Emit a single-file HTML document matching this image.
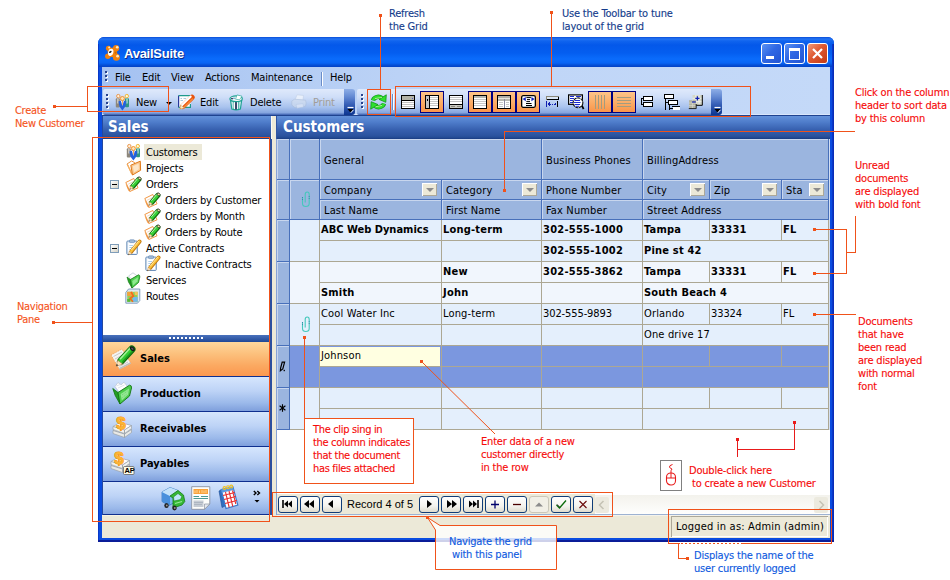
<!DOCTYPE html>
<html><head><meta charset="utf-8"><title>AvailSuite</title>
<style>
html,body{margin:0;padding:0}
body{width:950px;height:580px;position:relative;overflow:hidden;background:#fff;font-family:"DejaVu Sans Condensed","Liberation Sans",sans-serif;font-size:11px;color:#000;line-height:13px}
.a{position:absolute}
svg{position:absolute;overflow:visible}
.t{position:absolute;white-space:nowrap;letter-spacing:-0.2px}
.b{font-weight:bold}
.g{letter-spacing:.15px}.gb{letter-spacing:.2px}.n{letter-spacing:-.1px}.gb.n{letter-spacing:.25px}
#win{left:98px;top:37px;width:736px;height:505px;background:#0a4ce0;border-radius:6px 6px 0 0}
#title{left:98px;top:37px;width:736px;height:30px;border-radius:6px 6px 0 0;background:linear-gradient(#0a4ed8 0,#2474f4 2px,#1064ee 4px,#0458ea 8px,#045ef0 16px,#0a6cfc 22px,#0864f4 26px,#0450d8 28px,#0340c4 30px)}
#client{left:102px;top:67px;width:728px;height:471px;background:#c3d6f6}
.grip i{position:absolute;left:0;width:2px;height:2px;background:#27418c;box-shadow:1px 1px 0 #fff}
.tb{top:89px;height:26px;background:linear-gradient(#dfe9fb 0,#cfdef8 8px,#a9c3ee 18px,#84a4de 24px,#5577c0 25px,#3f62b0 26px);border-radius:2px 0 0 2px}
.cap{top:89px;height:26px;width:11px;background:linear-gradient(#8eaee6 0,#6288d2 8px,#335cb4 16px,#0c3590 26px);border-radius:0 3px 3px 0}
.hdr{top:116px;height:23px;background:linear-gradient(#6391da 0,#4f7dcb 6px,#365fae 14px,#2a529e 20px,#21478f 22px,#183a80 23px)}
.ht{color:#fff;font-weight:bold;font-size:15px;line-height:18px;letter-spacing:0}
.nb+.t{}.nb{left:102px;width:169px;height:34px;background:linear-gradient(#d6e6fd 0,#bdd3f6 14px,#9bb9ea 26px,#7f9fdc 34px);border-bottom:1px solid #0f2f8f}
.nb.sel{background:linear-gradient(#fed79c 0,#fcc07c 12px,#fba860 24px,#fb9850 34px)}
.chk{top:91px;width:22px;height:20px;border:1px solid #000080;background:linear-gradient(#fdc488 0,#fba962 12px,#f9954a 20px)}
.gh{background:#9bb5df;box-shadow:inset -1px -1px 0 #4870ba,inset 1px 1px 0 #c8d6ee}
.fb{width:15px;height:13px;background:#ece9d8;box-shadow:inset 1px 1px 0 #fff,inset -1px -1px 0 #aca899}
.fb:after{content:"";position:absolute;left:4px;top:5px;border:4px solid transparent;border-top:4px solid #8c8c8c;border-bottom:0}
.r0{background:#e4effc}.r1{background:#f1f6fd}.rs{background:#7b97df}
.vl{background:#aca793;width:1px}.hl{background:#aca793;height:1px}
.nv{top:496px;width:18px;height:15px;border:1px solid #0f3c78;border-radius:3px;background:linear-gradient(#fff 0,#f4f3ee 9px,#dedbcd 15px)}
.red,.org,.blu,.dbl{-webkit-text-stroke:.12px}
.red{color:#f60a0a;letter-spacing:-.2px}.org{color:#f5541c;letter-spacing:-.3px}.blu{color:#0f5ae0}.dbl{color:#143c8c}
</style></head><body>
<div class="a" id="win"></div>
<div class="a" id="title"></div>
<div class="a" id="client"></div>

<!-- title bar -->
<svg style="left:105px;top:45px" width="16" height="16" viewBox="0 0 16 16" ><g fill="#f2820e"><circle cx="3.4" cy="3.2" r="2.5"/><circle cx="11.1" cy="3.2" r="3.1"/><circle cx="2.8" cy="11.2" r="2.7"/><circle cx="11.4" cy="12.2" r="3.5"/><path d="M2.5 3.5L11 2L13 12L3 12Z"/></g>
<g fill="#c96a08"><circle cx="10.6" cy="7.6" r="1.1"/></g>
<g fill="#ffe9c4"><circle cx="4.2" cy="2.4" r="1"/><circle cx="12.2" cy="2.2" r="1.3"/><circle cx="12.6" cy="11.2" r="1.4"/></g>
<ellipse cx="5.7" cy="7.4" rx="2.6" ry="3.7" fill="#fff" transform="rotate(14 5.7 7.4)"/><ellipse cx="5.3" cy="6.9" rx="1.5" ry=".9" fill="#222" transform="rotate(-35 5.3 6.9)"/></svg>
<div class="t b" style="left:124px;top:46px;font-family:'Liberation Sans',sans-serif;font-size:13px;line-height:16px;color:#fff;letter-spacing:-0.25px;text-shadow:1px 1px 0 #0a2a8c">AvailSuite</div>
<div class="a" style="left:761px;top:43px;width:19px;height:19px;border:1px solid #fff;border-radius:3px;background:linear-gradient(135deg,#5a92f4 0,#3068e4 45%,#2254d2 100%)"><div class="a" style="left:4px;top:12px;width:8px;height:3px;background:#fff"></div></div>
<div class="a" style="left:784px;top:43px;width:19px;height:19px;border:1px solid #fff;border-radius:3px;background:linear-gradient(135deg,#5a92f4 0,#3068e4 45%,#2254d2 100%)"><div class="a" style="left:4px;top:4px;width:9px;height:8px;border:1px solid #fff;border-top-width:3px"></div></div>
<div class="a" style="left:807px;top:43px;width:19px;height:19px;border:1px solid #fff;border-radius:3px;background:linear-gradient(135deg,#f09a78 0,#de5830 45%,#c23a14 100%)"><svg style="left:0;top:0" width="19" height="19"><path d="M5 5L14 14M14 5L5 14" stroke="#fff" stroke-width="2.200" fill="none"/></svg></div>
<div class="a" style="left:832px;top:44px;width:2px;height:498px;background:linear-gradient(90deg,#0a3cd0,#0828b0)"></div>
<div class="a" style="left:98px;top:44px;width:1px;height:498px;background:#0838c8"></div>
<div class="a" style="left:98px;top:540px;width:736px;height:2px;background:#0a1c98"></div>
<!-- menu bar -->
<div class="a" style="left:102px;top:67px;width:728px;height:48px;background:linear-gradient(90deg,#a4c1f1 0,#b4cdf4 25%,#bfd5f7 50%,#c4d9f8 100%)"></div>
<div class="a grip" style="left:105px;top:71px"><i style="top:0"></i><i style="top:4px"></i><i style="top:8px"></i></div>
<div class="t" style="left:115px;top:71px">File</div>
<div class="t" style="left:142px;top:71px">Edit</div>
<div class="t" style="left:171px;top:71px">View</div>
<div class="t" style="left:205px;top:71px">Actions</div>
<div class="t" style="left:251px;top:71px">Maintenance</div>
<div class="t" style="left:330px;top:71px">Help</div>
<div class="a" style="left:321px;top:72px;width:1px;height:14px;background:#6a8cc8;box-shadow:1px 0 0 #fff"></div>
<!-- toolbar 1 -->
<div class="a" style="left:102px;top:114px;width:728px;height:1px;background:#d9e6fb"></div>
<div class="a" style="left:102px;top:115px;width:728px;height:1px;background:#1f4390"></div>
<div class="a tb" style="left:103px;top:89px;width:241px;height:26px"></div>
<div class="a cap" style="left:344px;top:89px;width:11px;height:26px"></div>
<div class="a grip" style="left:106px;top:94px"><i style="top:0"></i><i style="top:4px"></i><i style="top:8px"></i><i style="top:12px"></i></div>
<svg style="left:115px;top:94px" width="15" height="17" viewBox="0 0 15 17" ><rect x=".8" y="4.200" width="4" height="9.300" rx="1" fill="#8d877c"/><rect x="2.300" y="4.500" width="1.200" height="5" fill="#e4e0d8"/><circle cx="3.300" cy="2.100" r="1.700" fill="#fff0dc" stroke="#e89040" stroke-width=".9"/>
<rect x="10" y="4.200" width="4" height="9" rx="1" fill="#2f9684"/><rect x="11.400" y="4.500" width="1.200" height="5" fill="#c8ece4"/><circle cx="11.800" cy="2.100" r="1.700" fill="#fff8d8" stroke="#f0b020" stroke-width=".9"/>
<path d="M3.400 7.400Q7.400 5.500 11.400 7.400L10.400 12.500L7.400 16.500L4.400 12.500Z" fill="#2460dc"/><path d="M5.900 6.700L8.900 6.700L7.400 12Z" fill="#fff"/><path d="M7 7L7.800 7L7.700 10.500L7.400 11.300L7.100 10.500Z" fill="#f08a1c"/>
<circle cx="7.400" cy="4.500" r="2" fill="#ffe2b4" stroke="#f08a1c" stroke-width=".9"/></svg>
<div class="t" style="left:136px;top:96px">New</div>
<div class="a" style="left:166px;top:102px;border:3px solid transparent;border-top:3px solid #000;border-bottom:0"></div>
<svg style="left:178px;top:94px" width="17" height="16" viewBox="0 0 17 16" ><rect x=".6" y="1.600" width="11.800" height="11.800" fill="#fff"/><path d="M.6 13.400V1.600" stroke="#28389c" stroke-width="1.200" fill="none"/><path d="M.6 1.600H12.400M12.400 10V13.400H.6" stroke="#1f9a8c" stroke-width="1.200" fill="none"/><path d="M2.500 4.500H4M5.500 4.500H8M2.500 6.500H5" stroke="#a8c8dc" stroke-width="1"/>
<path d="M14 3.400L4.800 12.400" stroke="#e8540f" stroke-width="5.400" stroke-linecap="round"/><path d="M12.600 2.600L3.800 11.200" stroke="#fff" stroke-width="2.200" stroke-linecap="round"/><path d="M14.500 5L6.500 12.800" stroke="#f88a3a" stroke-width="1.600" stroke-linecap="round"/><path d="M1.800 15.200L2.600 11L6.400 14Z" fill="#fbe9c8" stroke="#c9a26a" stroke-width=".5"/><path d="M1.800 15.200L2.100 13.800L3.200 14.700Z" fill="#d8a020"/></svg>
<div class="t" style="left:200px;top:96px">Edit</div>
<svg style="left:229px;top:94px" width="15" height="17" viewBox="0 0 15 17" ><path d="M1.600 6.500L12.600 6.500L11.400 15Q7.100 16.600 2.800 15Z" fill="#eef6fb" stroke="#1fa294" stroke-width="1.200"/><path d="M4.300 8V15M9.800 8V15" stroke="#1fa294" stroke-width="1"/><path d="M7 7.500V15.600" stroke="#10204c" stroke-width="1.600"/><path d="M5.200 8.500V14.500" stroke="#fff" stroke-width="1.200"/><ellipse cx="7.100" cy="4.800" rx="6.200" ry="2.900" fill="#f4f8fa" stroke="#1fa294" stroke-width="1.200"/><path d="M6.500 5.200L8 .9L13 2.200L10.500 5.800Z" fill="#fff" stroke="#1fa294" stroke-width=".6"/><circle cx="3" cy="4.600" r=".9" fill="#10204c"/><circle cx="5" cy="4.300" r=".8" fill="#3a8ab8"/></svg>
<div class="t" style="left:250px;top:96px">Delete</div>
<svg style="left:291px;top:94px" width="16" height="15" viewBox="0 0 16 15" ><g opacity=".55"><path d="M4 6L6 .8L12.500 1.500L12 6Z" fill="#fff" stroke="#b6c4d8" stroke-width=".6"/><path d="M.8 7L3.500 5.200L14.500 6.200L15.200 9L14.500 12.200L4 13.800L.8 11Z" fill="#d6e0ee" stroke="#a8b8d0" stroke-width=".7"/><path d="M5 10.500L12 9.700L12.500 13L6 14.300Z" fill="#f4f6fa" stroke="#b6c4d8" stroke-width=".5"/></g></svg>
<div class="t" style="left:313px;top:96px;color:#a19d96">Print</div>
<svg style="left:345px;top:106px" width="10" height="10" viewBox="0 0 10 10" ><path d="M2.500 1.500H8.500" stroke="#fff" stroke-width="1.200"/><path d="M2.500 3H8.500L5.500 6.500Z" fill="#000"/><path d="M5.800 6.800L8.500 3.800" stroke="#fff" stroke-width="1"/></svg>
<!-- toolbar 2 -->
<div class="a tb" style="left:357px;top:89px;width:354px;height:26px"></div>
<div class="a cap" style="left:711px;top:89px;width:11px;height:26px"></div>
<div class="a grip" style="left:361px;top:94px"><i style="top:0"></i><i style="top:4px"></i><i style="top:8px"></i><i style="top:12px"></i></div>
<svg style="left:370px;top:94px" width="17" height="16" viewBox="0 0 17 16" ><g fill="none" stroke="#12961a" stroke-width="4.400"><path d="M3 6.400A5.500 5 0 0 1 11.800 4"/><path d="M14 9.600A5.500 5 0 0 1 5.200 12"/></g>
<g fill="none" stroke="#2fe02f" stroke-width="3"><path d="M3 6.400A5.500 5 0 0 1 11.800 4"/><path d="M14 9.600A5.500 5 0 0 1 5.200 12"/></g>
<path d="M16.300 .8L15.800 8.300L9 5.400Z" fill="#2fe02f" stroke="#12961a" stroke-width=".8"/><path d="M.7 15.200L1.200 7.700L8 10.600Z" fill="#2fe02f" stroke="#12961a" stroke-width=".8"/>
<path d="M5 4.600L12 3.400M5.500 12.800L12 11.400" stroke="#c8f4a0" stroke-width=".8"/></svg>
<div class="a" style="left:392px;top:94px;width:1px;height:16px;background:#6a8cc8;box-shadow:1px 0 0 #fff"></div>
<div class="a chk" style="left:420px"></div>
<div class="a chk" style="left:468px"></div>
<div class="a chk" style="left:492px"></div>
<div class="a chk" style="left:516px"></div>
<div class="a chk" style="left:588px"></div>
<div class="a chk" style="left:612px"></div>
<svg style="left:401px;top:95px" width="14" height="14" viewBox="0 0 14 14" shape-rendering="crispEdges"><rect x="0" y="0" width="14" height="14" fill="#000"/><rect x="1" y="1" width="12" height="4" fill="#b3b3a7"/><rect x="11" y="3" width="1" height="1" fill="#5a5ac4"/><rect x="1" y="6" width="12" height="7" fill="#fff"/><path d="M1 7.500H13M1 9.500H13M1 11.500H13" stroke="#c4c4c4"/></svg>
<svg style="left:425px;top:95px" width="14" height="14" viewBox="0 0 14 14" shape-rendering="crispEdges"><rect x="0" y="0" width="14" height="14" fill="#000"/><rect x="1" y="1" width="3" height="12" fill="#c4c4c4"/><rect x="2" y="4" width="1" height="2" fill="#000"/><rect x="5" y="1" width="8" height="12" fill="#fff"/><path d="M5 2.500H13M5 4.500H13M5 6.500H13M5 8.500H13M5 10.500H13" stroke="#c8c8c8"/></svg>
<svg style="left:449px;top:95px" width="14" height="14" viewBox="0 0 14 14" shape-rendering="crispEdges"><rect x="0" y="0" width="14" height="14" fill="#000"/><rect x="1" y="1" width="12" height="8" fill="#fff"/><path d="M1 2.500H13M1 4.500H13M1 6.500H13" stroke="#c4c4c4"/><rect x="1" y="10" width="12" height="3" fill="#c8c8c0"/><path d="M2 11.500H6M8 11.500H12" stroke="#8c8c84"/></svg>
<svg style="left:473px;top:95px" width="14" height="14" viewBox="0 0 14 14" shape-rendering="crispEdges"><rect x="0" y="0" width="14" height="14" fill="#000"/><rect x="1" y="1" width="12" height="2" fill="#b8b8b0"/><rect x="1" y="3" width="12" height="10" fill="#fff"/><path d="M1 4.500H13M1 6.500H13M1 8.500H13M1 10.500H13" stroke="#c8c8c8"/></svg>
<svg style="left:497px;top:95px" width="14" height="14" viewBox="0 0 14 14" shape-rendering="crispEdges"><rect x="0" y="0" width="14" height="14" fill="#000"/><rect x="1" y="1" width="12" height="2" fill="#b0b0a8"/><rect x="1" y="3" width="12" height="1" fill="#e8e8e0"/><rect x="1" y="4" width="12" height="2" fill="#b8b8b0"/><rect x="1" y="6" width="12" height="7" fill="#fff"/><rect x="6.500" y="4" width="1" height="9" fill="#8888a0"/><path d="M2 7.500H5.500M8.500 7.500H12M2 9.500H5.500M8.500 9.500H12M2 11.500H5.500M8.500 11.500H12" stroke="#c8c8c8"/></svg>
<svg style="left:521px;top:95px" width="15" height="13" viewBox="0 0 15 13" ><rect x=".65" y=".65" width="13.700" height="11.700" rx="1.500" fill="#fff" stroke="#000" stroke-width="1.300"/><path d="M1.600 4.100L4.800 1.900V6.300ZM13.600 4.100L10.400 1.900V6.300Z" fill="#1020c0"/><path d="M5.400 2.600H9.900M6 4.600H9M5.400 6.600H9M5 8.500H10.500M5 10.500H11" stroke="#000" stroke-width="1"/></svg>
<svg style="left:546px;top:96px" width="13" height="12" viewBox="0 0 13 12" shape-rendering="crispEdges"><rect x=".5" y=".5" width="11.500" height="3" fill="#dce6f4"/><path d="M.5 4V.5H12.500" fill="none" stroke="#8c8878"/><path d="M.5 3.500H12.500V.5" fill="none" stroke="#000"/><path d="M.5 5V11" stroke="#1020b0"/><path d="M11.500 5V11" stroke="#000"/><path d="M1 8L3.500 6V10ZM11 8L8.500 6V10Z" fill="#1020b0"/><path d="M3 8H4.500M5.500 8H6.500M7.500 8H9" stroke="#1020b0"/></svg>
<svg style="left:568px;top:94px" width="17" height="16" viewBox="0 0 17 16" ><rect x=".6" y=".9" width="13.800" height="9.400" fill="#fff" stroke="#000" stroke-width="1.200"/><path d="M2 2.500H6M8 2.500H13M2 4.500H6M2 6.500H5M2 8.500H5" stroke="#1a2ad0" stroke-width="1"/><circle cx="10" cy="8.800" r="4.900" fill="#fff" stroke="#111" stroke-width="1.100" stroke-dasharray="3 .6"/><path d="M6.500 6.500H12M6 8.500H12.500M6.500 10.500H12M7.500 12.300H11" stroke="#1a2ad0" stroke-width="1"/><path d="M13.800 11.500L15.600 15" stroke="#000" stroke-width="1.700"/></svg>
<svg style="left:595px;top:95px" width="12" height="15" viewBox="0 0 12 15" shape-rendering="crispEdges"><path d="M.5 0V14M3.500 0V14M6.500 0V14M9.500 0V14" stroke="#a39c80" stroke-width="1"/></svg>
<svg style="left:617px;top:97px" width="15" height="11" viewBox="0 0 15 11" shape-rendering="crispEdges"><path d="M0 .5H14M0 3.500H14M0 6.500H14M0 9.500H14" stroke="#a39c80" stroke-width="1"/></svg>
<svg style="left:640px;top:96px" width="13" height="11" viewBox="0 0 13 11" shape-rendering="crispEdges"><path d="M3.500 2.500H1.500V8.500H3.500" fill="none" stroke="#000"/><rect x="3.500" y=".5" width="9" height="4" fill="#fff" stroke="#000"/><rect x="3.500" y="6.500" width="9" height="4" fill="#fff" stroke="#000"/></svg>
<svg style="left:664px;top:94px" width="17" height="16" viewBox="0 0 17 16" shape-rendering="crispEdges"><path d="M1.500 4V16M1.500 8.500H5M5.500 10V16M5.500 14.500H9" fill="none" stroke="#000"/><rect x=".5" y=".5" width="9" height="4" fill="#fff" stroke="#000"/><rect x="4.500" y="6.500" width="9" height="4" fill="#fff" stroke="#000"/><rect x="9" y="13" width="7" height="3" fill="#fff"/><path d="M8 12.500H16" stroke="#000"/></svg>
<svg style="left:688px;top:95px" width="15" height="15" viewBox="0 0 15 15" ><rect x="4.500" y="0" width="10" height="10" fill="#d4d8c8"/><path d="M4.500 3.300H14.500M4.500 6.600H14.500M7.800 0V10M11.100 0V10" stroke="#f4f4ec" stroke-width=".8"/><path d="M14.300 0V10.300H8" fill="none" stroke="#000" stroke-width="1"/><rect x="1" y="5.200" width="7" height="8" fill="#b4b4a4"/><path d="M1 8H8M1 10.500H8M4.500 5.200V13.200" stroke="#d8d8cc" stroke-width=".7"/><path d="M.8 13.600H8.200V9" fill="none" stroke="#222" stroke-width="1"/><path d="M7.300 3.300H11.500M9.400 1.200V5.400" stroke="#1020b0" stroke-width="1.200"/><path d="M4 7H7.800" stroke="#1020b0" stroke-width="1.200"/></svg>
<svg style="left:712px;top:106px" width="10" height="10" viewBox="0 0 10 10" ><path d="M2.500 1.500H8.500" stroke="#fff" stroke-width="1.200"/><path d="M2.500 3H8.500L5.500 6.500Z" fill="#000"/><path d="M5.800 6.800L8.500 3.800" stroke="#fff" stroke-width="1"/></svg>
<!-- headers -->
<div class="a hdr" style="left:102px;top:116px;width:169px;height:23px"></div>
<div class="a hdr" style="left:277px;top:116px;width:553px;height:23px"></div>
<div class="t ht" style="left:108px;top:118px">Sales</div>
<div class="t ht" style="left:283px;top:118px">Customers</div>
<div class="a" style="left:271px;top:116px;width:5px;height:400px;background:#ece9d8"></div>
<div class="a" style="left:271px;top:116px;width:1px;height:400px;background:#fbfaf6"></div>
<div class="a" style="left:276px;top:116px;width:1px;height:23px;background:#2f55a4"></div>
<div class="a" style="left:276px;top:139px;width:1px;height:377px;background:#86a2d6"></div>
<!-- left pane -->
<div class="a" style="left:102px;top:139px;width:169px;height:196px;background:#fff"></div>
<div class="a" style="left:144px;top:144px;width:58px;height:16px;background:#ece9d8"></div>
<div class="t" style="left:146px;top:146px">Customers</div>
<svg style="left:126px;top:144px" width="15" height="17" viewBox="0 0 15 17" ><rect x=".8" y="4.200" width="4" height="9.300" rx="1" fill="#8d877c"/><rect x="2.300" y="4.500" width="1.200" height="5" fill="#e4e0d8"/><circle cx="3.300" cy="2.100" r="1.700" fill="#fff0dc" stroke="#e89040" stroke-width=".9"/>
<rect x="10" y="4.200" width="4" height="9" rx="1" fill="#2f9684"/><rect x="11.400" y="4.500" width="1.200" height="5" fill="#c8ece4"/><circle cx="11.800" cy="2.100" r="1.700" fill="#fff8d8" stroke="#f0b020" stroke-width=".9"/>
<path d="M3.400 7.400Q7.400 5.500 11.400 7.400L10.400 12.500L7.400 16.500L4.400 12.500Z" fill="#2460dc"/><path d="M5.900 6.700L8.900 6.700L7.400 12Z" fill="#fff"/><path d="M7 7L7.800 7L7.700 10.500L7.400 11.300L7.100 10.500Z" fill="#f08a1c"/>
<circle cx="7.400" cy="4.500" r="2" fill="#ffe2b4" stroke="#f08a1c" stroke-width=".9"/></svg>
<div class="t" style="left:146px;top:162px">Projects</div>
<svg style="left:126px;top:160px" width="16" height="16" viewBox="0 0 16 16" ><path d="M1 4L5.500 1L8.500 2.500L8.500 12.500L6.500 15Z" fill="#fff" stroke="#e8862a" stroke-width=".9"/><path d="M1.800 5L3.500 9L5.500 13.500" stroke="#f6b060" stroke-width="1.200" fill="none"/><path d="M6.500 15L4.800 5.200L14.300 1.200L14.600 10.300Z" fill="#f9c890" stroke="#e07a1c" stroke-width="1"/><path d="M6.800 6.300L12.600 3.800L12.900 9.300L8 12.300Z" fill="#fde6c8"/></svg>
<div class="t" style="left:146px;top:178px">Orders</div>
<svg style="left:125px;top:176px" width="17" height="16" viewBox="0 0 17 16" ><path d="M.8 6.500L8.800 2.500L13 11.800L5 15.400Z" fill="#fff" stroke="#ee8a2c" stroke-width=".9"/><path d="M1.200 8.500L3.800 14.800L5 15.400M2 10.500L4.500 15" stroke="#ee8a2c" stroke-width=".6" fill="none"/><path d="M3.200 8.200L9 5.400M4 10.200L10 7.400M5 12.300L10.800 9.600" stroke="#e8c4a4" stroke-width=".7"/><path d="M13.800 3.400L7.600 10.600" stroke="#116c11" stroke-width="5.200" stroke-linecap="round"/><path d="M13.600 3.200L7.500 10.300" stroke="#36d036" stroke-width="3.200" stroke-linecap="round"/><path d="M12.800 2.400L7.400 8.800" stroke="#b4f4a8" stroke-width="1"/><path d="M4.600 13.600L5.500 9.800L8.600 12.300Z" fill="#fde2b8" stroke="#b8884c" stroke-width=".4"/><path d="M4.600 13.600L5 12.300L5.900 13Z" fill="#222"/><ellipse cx="14.600" cy="2.400" rx="1.700" ry="1.200" fill="#f4e8a0" stroke="#222" stroke-width=".7" transform="rotate(40 14.600 2.400)"/></svg>
<div class="t" style="left:165px;top:194px">Orders by Customer</div>
<svg style="left:144px;top:192px" width="17" height="16" viewBox="0 0 17 16" ><path d="M.8 6.500L8.800 2.500L13 11.800L5 15.400Z" fill="#fff" stroke="#ee8a2c" stroke-width=".9"/><path d="M1.200 8.500L3.800 14.800L5 15.400M2 10.500L4.500 15" stroke="#ee8a2c" stroke-width=".6" fill="none"/><path d="M3.200 8.200L9 5.400M4 10.200L10 7.400M5 12.300L10.800 9.600" stroke="#e8c4a4" stroke-width=".7"/><path d="M13.800 3.400L7.600 10.600" stroke="#116c11" stroke-width="5.200" stroke-linecap="round"/><path d="M13.600 3.200L7.500 10.300" stroke="#36d036" stroke-width="3.200" stroke-linecap="round"/><path d="M12.800 2.400L7.400 8.800" stroke="#b4f4a8" stroke-width="1"/><path d="M4.600 13.600L5.500 9.800L8.600 12.300Z" fill="#fde2b8" stroke="#b8884c" stroke-width=".4"/><path d="M4.600 13.600L5 12.300L5.900 13Z" fill="#222"/><ellipse cx="14.600" cy="2.400" rx="1.700" ry="1.200" fill="#f4e8a0" stroke="#222" stroke-width=".7" transform="rotate(40 14.600 2.400)"/></svg>
<div class="t" style="left:165px;top:210px">Orders by Month</div>
<svg style="left:144px;top:208px" width="17" height="16" viewBox="0 0 17 16" ><path d="M.8 6.500L8.800 2.500L13 11.800L5 15.400Z" fill="#fff" stroke="#ee8a2c" stroke-width=".9"/><path d="M1.200 8.500L3.800 14.800L5 15.400M2 10.500L4.500 15" stroke="#ee8a2c" stroke-width=".6" fill="none"/><path d="M3.200 8.200L9 5.400M4 10.200L10 7.400M5 12.300L10.800 9.600" stroke="#e8c4a4" stroke-width=".7"/><path d="M13.800 3.400L7.600 10.600" stroke="#116c11" stroke-width="5.200" stroke-linecap="round"/><path d="M13.600 3.200L7.500 10.300" stroke="#36d036" stroke-width="3.200" stroke-linecap="round"/><path d="M12.800 2.400L7.400 8.800" stroke="#b4f4a8" stroke-width="1"/><path d="M4.600 13.600L5.500 9.800L8.600 12.300Z" fill="#fde2b8" stroke="#b8884c" stroke-width=".4"/><path d="M4.600 13.600L5 12.300L5.900 13Z" fill="#222"/><ellipse cx="14.600" cy="2.400" rx="1.700" ry="1.200" fill="#f4e8a0" stroke="#222" stroke-width=".7" transform="rotate(40 14.600 2.400)"/></svg>
<div class="t" style="left:165px;top:226px">Orders by Route</div>
<svg style="left:144px;top:224px" width="17" height="16" viewBox="0 0 17 16" ><path d="M.8 6.500L8.800 2.500L13 11.800L5 15.400Z" fill="#fff" stroke="#ee8a2c" stroke-width=".9"/><path d="M1.200 8.500L3.800 14.800L5 15.400M2 10.500L4.500 15" stroke="#ee8a2c" stroke-width=".6" fill="none"/><path d="M3.200 8.200L9 5.400M4 10.200L10 7.400M5 12.300L10.800 9.600" stroke="#e8c4a4" stroke-width=".7"/><path d="M13.800 3.400L7.600 10.600" stroke="#116c11" stroke-width="5.200" stroke-linecap="round"/><path d="M13.600 3.200L7.500 10.300" stroke="#36d036" stroke-width="3.200" stroke-linecap="round"/><path d="M12.800 2.400L7.400 8.800" stroke="#b4f4a8" stroke-width="1"/><path d="M4.600 13.600L5.500 9.800L8.600 12.300Z" fill="#fde2b8" stroke="#b8884c" stroke-width=".4"/><path d="M4.600 13.600L5 12.300L5.900 13Z" fill="#222"/><ellipse cx="14.600" cy="2.400" rx="1.700" ry="1.200" fill="#f4e8a0" stroke="#222" stroke-width=".7" transform="rotate(40 14.600 2.400)"/></svg>
<div class="t" style="left:146px;top:242px">Active Contracts</div>
<svg style="left:126px;top:239px" width="16" height="17" viewBox="0 0 16 17" ><rect x=".8" y="2" width="10.500" height="13.500" rx="1" fill="#dfe9f4" stroke="#5f86b4" stroke-width=".9"/><rect x="2.200" y="3.800" width="7.800" height="10.500" fill="#fff"/><rect x="3.500" y=".8" width="5" height="2.800" rx=".8" fill="#9fb8d4" stroke="#5f86b4" stroke-width=".6"/><path d="M3.300 6.500H7M3.300 8.500H6M3.300 10.500H5" stroke="#9cc4e4" stroke-width=".8"/>
<path d="M13.600 2.600L5 13" stroke="#c27a12" stroke-width="4" stroke-linecap="round"/><path d="M13.400 2.500L5 12.600" stroke="#fbc23c" stroke-width="2.400" stroke-linecap="round"/><path d="M12.800 2L5.400 11" stroke="#fff2b8" stroke-width=".8"/><path d="M2.400 16L3.200 12.200L6 14.500Z" fill="#fde6c0" stroke="#b8884c" stroke-width=".4"/><path d="M2.400 16L2.700 14.800L3.600 15.500Z" fill="#222"/></svg>
<div class="t" style="left:165px;top:258px">Inactive Contracts</div>
<svg style="left:145px;top:255px" width="16" height="17" viewBox="0 0 16 17" ><rect x=".8" y="2" width="10.500" height="13.500" rx="1" fill="#dfe9f4" stroke="#5f86b4" stroke-width=".9"/><rect x="2.200" y="3.800" width="7.800" height="10.500" fill="#fff"/><rect x="3.500" y=".8" width="5" height="2.800" rx=".8" fill="#9fb8d4" stroke="#5f86b4" stroke-width=".6"/><path d="M3.300 6.500H7M3.300 8.500H6M3.300 10.500H5" stroke="#9cc4e4" stroke-width=".8"/>
<path d="M13.600 2.600L5 13" stroke="#c27a12" stroke-width="4" stroke-linecap="round"/><path d="M13.400 2.500L5 12.600" stroke="#fbc23c" stroke-width="2.400" stroke-linecap="round"/><path d="M12.800 2L5.400 11" stroke="#fff2b8" stroke-width=".8"/><path d="M2.400 16L3.200 12.200L6 14.500Z" fill="#fde6c0" stroke="#b8884c" stroke-width=".4"/><path d="M2.400 16L2.700 14.800L3.600 15.500Z" fill="#222"/></svg>
<div class="t" style="left:146px;top:274px">Services</div>
<svg style="left:126px;top:272px" width="15" height="17" viewBox="0 0 15 17" ><path d="M2.500 4L7 .8L11 3.800L6 7.500Z" fill="#fff" stroke="#aab6c4" stroke-width=".6"/><path d="M1 5L4.500 7.500L6 16L2.500 10Z" fill="#27a327" stroke="#157a15" stroke-width=".7"/><path d="M6 16L4.500 7.500L12.500 2.800Q14 3 13.800 5L12.500 10.500Z" fill="#4fd14f" stroke="#157a15" stroke-width=".8"/><path d="M6.300 9L12 5.200L11.500 9.300L7 13.500Z" fill="#8fe88f"/></svg>
<div class="t" style="left:146px;top:290px">Routes</div>
<svg style="left:125px;top:288px" width="16" height="16" viewBox="0 0 16 16" ><path d="M.8 4.500L3.500 1H14.800V12.500L12.500 15.200H.8Z" fill="#dfe8f2" stroke="#7a98b8" stroke-width=".9"/><rect x="2.200" y="3.800" width="10.500" height="10" fill="#8fd05c"/><path d="M2.200 3.800H8V8H2.200Z" fill="#f2a23c"/><path d="M8 9H12.700V13.800H7Z" fill="#74b8ec"/><path d="M6 3.800L8.500 8L5 10.500L8 13.800" fill="none" stroke="#f26a1c" stroke-width="1.600"/><path d="M2.200 11H5V13.800H2.200Z" fill="#58b838"/><path d="M9.500 3.800H12.700V7H10Z" fill="#f6c45c"/></svg>
<div class="a" style="left:110px;top:180px;width:7px;height:7px;border:1px solid #7f9db9;background:linear-gradient(135deg,#fff,#d6d3c6)"><div class="a" style="left:1px;top:3px;width:5px;height:1px;background:#000"></div></div>
<div class="a" style="left:110px;top:244px;width:7px;height:7px;border:1px solid #7f9db9;background:linear-gradient(135deg,#fff,#d6d3c6)"><div class="a" style="left:1px;top:3px;width:5px;height:1px;background:#000"></div></div>
<div class="a" style="left:102px;top:335px;width:169px;height:7px;background:linear-gradient(#4a72bd,#1f4795)"></div>
<div class="a" style="left:169px;top:337px;width:36px;height:2px;background:repeating-linear-gradient(90deg,#fff 0,#fff 2px,transparent 2px,transparent 4px)"></div>
<div class="a nb sel" style="left:102px;top:342px;width:169px;height:34px"></div>
<div class="t b" style="left:140px;top:352px;letter-spacing:0">Sales</div>
<svg style="left:110px;top:345px" width="25" height="25" viewBox="0 0 25 25" ><path d="M1 10L12 4L21 18.500L9.500 24.500Z" fill="#f4f4f2" stroke="#f0a050" stroke-width=".8" stroke-dasharray="1.200 .8"/><path d="M3.500 11.500L12 7M5 14L13.500 9.500M6.500 16.500L15 12M8 19L16.500 14.500M9.500 21.500L18 17" stroke="#c8c8c8" stroke-width="1"/><path d="M9.500 24.500L21 18.500L20.200 17.300L9 23Z" fill="#bdbdbd"/>
<path d="M21.800 4.200L11 16" stroke="#0f6a0f" stroke-width="7.400" stroke-linecap="round"/><path d="M21.600 4L10.800 15.800" stroke="#32cc32" stroke-width="5.200" stroke-linecap="round"/><path d="M20.200 3L10 14.200" stroke="#a4f098" stroke-width="1.600"/><path d="M22.800 5.800L12.500 17" stroke="#1c9a1c" stroke-width="1.400"/><path d="M6.200 21.200L7.600 15.200L12.800 19.200Z" fill="#fde2b8" stroke="#a87a44" stroke-width=".5"/><path d="M6.200 21.200L6.800 19L8.300 20.200Z" fill="#222"/><ellipse cx="22.300" cy="3.700" rx="2.800" ry="2" fill="#141414" transform="rotate(42 22.300 3.700)"/><ellipse cx="22.300" cy="3.700" rx="1.400" ry=".9" fill="#555" transform="rotate(42 22.300 3.700)"/></svg>
<div class="a nb" style="left:102px;top:377px;width:169px;height:34px"></div>
<div class="t b" style="left:140px;top:387px;letter-spacing:0">Production</div>
<svg style="left:112px;top:381px" width="21" height="24" viewBox="0 0 21 24" ><path d="M3 5.500L6 1.500L9 4L12 1.200L15.500 5.500L7 11Z" fill="#fff" stroke="#b9c4d2" stroke-width=".7"/><path d="M4.500 5L10.500 2.500M6 7L12.500 4" stroke="#d0d8e4" stroke-width=".7"/><path d="M.8 7.500L6 11.500L8 23L3.200 14.500Z" fill="#249e24" stroke="#127412" stroke-width=".8"/><path d="M8 23L6 11.500L17.500 4.200Q19.800 4.200 19.500 7L17.500 15Z" fill="#4ccc4c" stroke="#127412" stroke-width=".9"/><path d="M8.600 13L17 7.500L16.200 13.500L9.800 19.500Z" fill="#92e892"/><path d="M10 14L15.500 10M10.500 16.500L15 13" stroke="#5fc05f" stroke-width=".7" stroke-dasharray="1 1"/></svg>
<div class="a nb" style="left:102px;top:412px;width:169px;height:34px"></div>
<div class="t b" style="left:140px;top:422px;letter-spacing:0">Receivables</div>
<svg style="left:112px;top:416px" width="21" height="24" viewBox="0 0 21 24" ><path d="M1 14.500L8 10.500L19.500 13.500L12.500 18Z" fill="#fff" stroke="#9aa0a8" stroke-width=".7"/><path d="M1 14.500V17.500L12.500 21.500V18ZM12.500 18V21.500L19.500 16.500V13.500Z" fill="#e9e9e6" stroke="#9aa0a8" stroke-width=".7"/><path d="M1 10.500L8 6.500L19.500 9.500L12.500 14Z" fill="#fff" stroke="#9aa0a8" stroke-width=".7"/><path d="M1 10.500V13.500L12.500 17.500V14ZM12.500 14V17.500L19.500 12.500V9.500Z" fill="#f2f2ef" stroke="#9aa0a8" stroke-width=".7"/>
<text x="4.200" y="13.200" font-family="Liberation Sans,sans-serif" font-weight="bold" font-size="17" fill="#f7931a" stroke="#f7931a" stroke-width=".9">$</text><text x="4.600" y="12.800" font-family="Liberation Sans,sans-serif" font-weight="bold" font-size="17" fill="#ffd24a" opacity=".55">$</text></svg>
<div class="a nb" style="left:102px;top:447px;width:169px;height:34px"></div>
<div class="t b" style="left:140px;top:457px;letter-spacing:0">Payables</div>
<svg style="left:110px;top:451px" width="25" height="24" viewBox="0 0 25 24" ><path d="M1 14.500L8 10.500L19.500 13.500L12.500 18Z" fill="#fff" stroke="#9aa0a8" stroke-width=".7"/><path d="M1 14.500V17.500L12.500 21.500V18ZM12.500 18V21.500L19.500 16.500V13.500Z" fill="#e9e9e6" stroke="#9aa0a8" stroke-width=".7"/><path d="M1 10.500L8 6.500L19.500 9.500L12.500 14Z" fill="#fff" stroke="#9aa0a8" stroke-width=".7"/><path d="M1 10.500V13.500L12.500 17.500V14ZM12.500 14V17.500L19.500 12.500V9.500Z" fill="#f2f2ef" stroke="#9aa0a8" stroke-width=".7"/>
<text x="4.200" y="13.200" font-family="Liberation Sans,sans-serif" font-weight="bold" font-size="17" fill="#f7931a" stroke="#f7931a" stroke-width=".9">$</text><text x="4.600" y="12.800" font-family="Liberation Sans,sans-serif" font-weight="bold" font-size="17" fill="#ffd24a" opacity=".55">$</text><rect x="13.500" y="15.500" width="10.500" height="8" rx="1" fill="#fffbe4" stroke="#555" stroke-width=".7"/><text x="14.600" y="22.200" font-family="Liberation Sans,sans-serif" font-weight="bold" font-size="7.500" fill="#000" letter-spacing="-.3">AP</text></svg>
<div class="a nb" style="left:102px;top:482px;width:169px;height:32px;border-bottom:1px solid #0f2f8f"></div>
<svg style="left:161px;top:486px" width="25" height="24" viewBox="0 0 25 24" ><path d="M1 6L9 1.500L17 4.500V14.500L8 19.500L1 15.500Z" fill="#7db8ee" stroke="#3a78c0" stroke-width=".8"/><path d="M1 6L9 10V19.500L1 15.500Z" fill="#4a90dc"/><path d="M1 6L9 1.500L17 4.500L9 10Z" fill="#c4e2fa"/><path d="M9 10L17 4.500L22.500 9L23.800 15.500L21 19L12 22V12Z" fill="#35b835" stroke="#157a15" stroke-width=".8"/><path d="M12.500 11L17 7.500L20.800 10.500L19.500 13.500L13 15Z" fill="#bfe6fa" stroke="#157a15" stroke-width=".5"/><path d="M14 17.500L21 15.500" stroke="#9be89b" stroke-width="1.200"/><ellipse cx="5.500" cy="19.500" rx="2.200" ry="2.600" fill="#222"/><ellipse cx="13.500" cy="22" rx="2.200" ry="2.400" fill="#222"/><ellipse cx="5.800" cy="19.500" rx=".9" ry="1.100" fill="#999"/><ellipse cx="13.800" cy="22" rx=".9" ry="1" fill="#999"/></svg>
<svg style="left:191px;top:486px" width="20" height="24" viewBox="0 0 20 24" ><path d="M.7 .7H18.800V18L13.500 23.300H.7Z" fill="#fdfdfb" stroke="#8a92a0" stroke-width=".9"/><rect x="2.500" y="3" width="14.500" height="5" fill="#f9a23a"/><path d="M4 4.500V7M6 4V7M8.500 4.500V7M11 4V7M13 4.500V7M15 4V7" stroke="#fde0a8" stroke-width=".8"/><path d="M2.500 10.500H8M10 10.500H17M2.500 12.500H17" stroke="#4a9a94" stroke-width="1"/><rect x="2.500" y="14.500" width="10" height="6.500" fill="#c6ccd4"/><path d="M3 16.500H12M3 18.500H11" stroke="#a8b0bc" stroke-width=".8"/><path d="M13.500 23.300V18H18.800Z" fill="#e4e8ee" stroke="#8a92a0" stroke-width=".7"/></svg>
<svg style="left:218px;top:485px" width="21" height="25" viewBox="0 0 21 25" ><path d="M1 6L4 22.500L7 21L5 4Z" fill="#2f6fc0" stroke="#1a4a94" stroke-width=".6"/><path d="M3.200 4.500L15 2L19.800 20L8 23.500Z" fill="#fff" stroke="#3a7acc" stroke-width="1.200"/><path d="M3.200 4.500L15 2L15.800 5L4 7.800Z" fill="#5a9ae0"/><path d="M5 10.500L16.800 7.500M6 14.500L17.800 11.500M7 18.500L18.800 15.500M7.500 7L11.200 22.500M11 6L14.800 21.500M14.500 5.500L17.800 19" stroke="#e83030" stroke-width="1.100"/><circle cx="6.500" cy="3" r="1.400" fill="none" stroke="#f0c020" stroke-width="1.100"/><circle cx="10" cy="2.200" r="1.400" fill="none" stroke="#f0c020" stroke-width="1.100"/><circle cx="13.300" cy="1.500" r="1.400" fill="none" stroke="#f0c020" stroke-width="1.100"/></svg>
<svg style="left:253px;top:490px" width="8" height="14" viewBox="0 0 8 14" ><path d="M.8 1L3 3L.8 5M4.300 1L6.500 3L4.300 5" stroke="#000" stroke-width="1.400" fill="none"/><path d="M1.500 10H6.500L4 12.500Z" fill="#000"/></svg>
<div class="a" style="left:270px;top:139px;width:2px;height:376px;background:#2c4f9e"></div>
<div class="a" style="left:102px;top:116px;width:1px;height:400px;background:#2448a0"></div>
<!-- status bar -->
<div class="a" style="left:102px;top:515px;width:728px;height:23px;background:#ece9d8"></div>
<div class="a" style="left:102px;top:515px;width:170px;height:1px;background:#f8f4e4"></div>
<div class="a" style="left:671px;top:516px;width:157px;height:21px;background:#ece9d8;box-shadow:inset 1px 1px 0 #aca899,inset -1px -1px 0 #fff"></div>
<div class="t" style="left:676px;top:520px;letter-spacing:.2px">Logged in as: Admin (admin)</div>
<!-- grid -->
<div class="a" style="left:277px;top:139px;width:553px;height:375px;background:#fff"></div>
<div class="a" style="left:829px;top:139px;width:1px;height:291px;background:#d3dff3"></div>
<div class="a gh" style="left:277px;top:139px;width:13px;height:41px"></div>
<div class="a gh" style="left:290px;top:139px;width:30px;height:41px"></div>
<div class="a gh" style="left:320px;top:139px;width:222px;height:41px"></div>
<div class="t g" style="left:324px;top:154px">General</div>
<div class="a gh" style="left:542px;top:139px;width:101px;height:41px"></div>
<div class="t g" style="left:546px;top:154px">Business Phones</div>
<div class="a gh" style="left:643px;top:139px;width:186px;height:41px"></div>
<div class="t g" style="left:647px;top:154px">BillingAddress</div>
<div class="a gh" style="left:277px;top:180px;width:13px;height:40px"></div>
<div class="a gh" style="left:290px;top:180px;width:30px;height:40px"></div>
<div class="a gh" style="left:320px;top:180px;width:122px;height:20px"></div>
<div class="t g" style="left:324px;top:184px">Company</div>
<div class="a fb" style="left:422px;top:183px;width:15px;height:13px"></div>
<div class="a gh" style="left:442px;top:180px;width:100px;height:20px"></div>
<div class="t g" style="left:446px;top:184px">Category</div>
<div class="a fb" style="left:522px;top:183px;width:15px;height:13px"></div>
<div class="a gh" style="left:542px;top:180px;width:101px;height:20px"></div>
<div class="t g" style="left:546px;top:184px">Phone Number</div>
<div class="a gh" style="left:643px;top:180px;width:67px;height:20px"></div>
<div class="t g" style="left:647px;top:184px">City</div>
<div class="a fb" style="left:690px;top:183px;width:15px;height:13px"></div>
<div class="a gh" style="left:710px;top:180px;width:72px;height:20px"></div>
<div class="t g" style="left:714px;top:184px">Zip</div>
<div class="a fb" style="left:762px;top:183px;width:15px;height:13px"></div>
<div class="a gh" style="left:782px;top:180px;width:47px;height:20px"></div>
<div class="t g" style="left:786px;top:184px">Sta</div>
<div class="a fb" style="left:809px;top:183px;width:15px;height:13px"></div>
<div class="a gh" style="left:320px;top:200px;width:122px;height:20px"></div>
<div class="t g" style="left:324px;top:204px">Last Name</div>
<div class="a gh" style="left:442px;top:200px;width:100px;height:20px"></div>
<div class="t g" style="left:446px;top:204px">First Name</div>
<div class="a gh" style="left:542px;top:200px;width:101px;height:20px"></div>
<div class="t g" style="left:546px;top:204px">Fax Number</div>
<div class="a gh" style="left:643px;top:200px;width:186px;height:20px"></div>
<div class="t g" style="left:647px;top:204px">Street Address</div>
<svg style="left:301px;top:191px" width="10" height="17" viewBox="0 0 10 17" ><path d="M1.500 6V12.500Q1.500 15.500 4.800 15.500Q8.200 15.500 8.200 12.500V3.500Q8.200 1 6.200 1Q4.200 1 4.200 3.500V11.500" fill="none" stroke="#46c8bc" stroke-width="1.100"/><path d="M1.500 6V9M8.200 5V9" stroke="#2a4a9c" stroke-width=".5" stroke-dasharray="1 1"/></svg>
<div class="a gh" style="left:277px;top:220px;width:13px;height:42px"></div>
<div class="a r0" style="left:290px;top:220px;width:539px;height:42px"></div>
<div class="a hl" style="left:320px;top:240px;width:509px;height:1px"></div>
<div class="a hl" style="left:290px;top:261px;width:539px;height:1px"></div>
<div class="a vl" style="left:319px;top:220px;width:1px;height:42px"></div>
<div class="a vl" style="left:441px;top:220px;width:1px;height:42px"></div>
<div class="a vl" style="left:541px;top:220px;width:1px;height:42px"></div>
<div class="a vl" style="left:642px;top:220px;width:1px;height:42px"></div>
<div class="a vl" style="left:828px;top:220px;width:1px;height:42px"></div>
<div class="a vl" style="left:709px;top:220px;width:1px;height:21px"></div>
<div class="a vl" style="left:781px;top:220px;width:1px;height:21px"></div>
<div class="t gb b" style="left:321px;top:223px;letter-spacing:0">ABC Web Dynamics</div>
<div class="t gb b" style="left:443px;top:223px">Long-term</div>
<div class="t gb b n" style="left:543px;top:223px">302-555-1000</div>
<div class="t gb b" style="left:644px;top:223px">Tampa</div>
<div class="t gb b n" style="left:711px;top:223px">33331</div>
<div class="t gb b" style="left:783px;top:223px">FL</div>
<div class="t gb b n" style="left:543px;top:244px">302-555-1002</div>
<div class="t gb b" style="left:644px;top:244px">Pine st 42</div>
<div class="a gh" style="left:277px;top:262px;width:13px;height:42px"></div>
<div class="a r1" style="left:290px;top:262px;width:539px;height:42px"></div>
<div class="a hl" style="left:320px;top:282px;width:509px;height:1px"></div>
<div class="a hl" style="left:290px;top:303px;width:539px;height:1px"></div>
<div class="a vl" style="left:319px;top:262px;width:1px;height:42px"></div>
<div class="a vl" style="left:441px;top:262px;width:1px;height:42px"></div>
<div class="a vl" style="left:541px;top:262px;width:1px;height:42px"></div>
<div class="a vl" style="left:642px;top:262px;width:1px;height:42px"></div>
<div class="a vl" style="left:828px;top:262px;width:1px;height:42px"></div>
<div class="a vl" style="left:709px;top:262px;width:1px;height:21px"></div>
<div class="a vl" style="left:781px;top:262px;width:1px;height:21px"></div>
<div class="t gb b" style="left:443px;top:265px">New</div>
<div class="t gb b n" style="left:543px;top:265px">302-555-3862</div>
<div class="t gb b" style="left:644px;top:265px">Tampa</div>
<div class="t gb b n" style="left:711px;top:265px">33331</div>
<div class="t gb b" style="left:783px;top:265px">FL</div>
<div class="t gb b" style="left:321px;top:286px">Smith</div>
<div class="t gb b" style="left:443px;top:286px">John</div>
<div class="t gb b" style="left:644px;top:286px">South Beach 4</div>
<div class="a gh" style="left:277px;top:304px;width:13px;height:42px"></div>
<div class="a r0" style="left:290px;top:304px;width:539px;height:42px"></div>
<div class="a hl" style="left:320px;top:324px;width:509px;height:1px"></div>
<div class="a hl" style="left:290px;top:345px;width:539px;height:1px"></div>
<div class="a vl" style="left:319px;top:304px;width:1px;height:42px"></div>
<div class="a vl" style="left:441px;top:304px;width:1px;height:42px"></div>
<div class="a vl" style="left:541px;top:304px;width:1px;height:42px"></div>
<div class="a vl" style="left:642px;top:304px;width:1px;height:42px"></div>
<div class="a vl" style="left:828px;top:304px;width:1px;height:42px"></div>
<div class="a vl" style="left:709px;top:304px;width:1px;height:21px"></div>
<div class="a vl" style="left:781px;top:304px;width:1px;height:21px"></div>
<div class="t g" style="left:321px;top:307px">Cool Water Inc</div>
<div class="t g" style="left:443px;top:307px">Long-term</div>
<div class="t g n" style="left:543px;top:307px">302-555-9893</div>
<div class="t g" style="left:644px;top:307px">Orlando</div>
<div class="t g n" style="left:711px;top:307px">33324</div>
<div class="t g" style="left:783px;top:307px">FL</div>
<div class="t g" style="left:644px;top:328px">One drive 17</div>
<div class="a gh" style="left:277px;top:346px;width:13px;height:42px"></div>
<div class="a rs" style="left:290px;top:346px;width:539px;height:42px"></div>
<div class="a hl" style="left:320px;top:366px;width:509px;height:1px"></div>
<div class="a hl" style="left:290px;top:387px;width:539px;height:1px"></div>
<div class="a vl" style="left:319px;top:346px;width:1px;height:42px"></div>
<div class="a vl" style="left:441px;top:346px;width:1px;height:42px"></div>
<div class="a vl" style="left:541px;top:346px;width:1px;height:42px"></div>
<div class="a vl" style="left:642px;top:346px;width:1px;height:42px"></div>
<div class="a vl" style="left:828px;top:346px;width:1px;height:42px"></div>
<div class="a vl" style="left:709px;top:346px;width:1px;height:21px"></div>
<div class="a vl" style="left:781px;top:346px;width:1px;height:21px"></div>
<div class="a gh" style="left:277px;top:388px;width:13px;height:42px"></div>
<div class="a r0" style="left:290px;top:388px;width:539px;height:42px"></div>
<div class="a hl" style="left:320px;top:408px;width:509px;height:1px"></div>
<div class="a hl" style="left:290px;top:429px;width:539px;height:1px"></div>
<div class="a vl" style="left:319px;top:388px;width:1px;height:42px"></div>
<div class="a vl" style="left:441px;top:388px;width:1px;height:42px"></div>
<div class="a vl" style="left:541px;top:388px;width:1px;height:42px"></div>
<div class="a vl" style="left:642px;top:388px;width:1px;height:42px"></div>
<div class="a vl" style="left:828px;top:388px;width:1px;height:42px"></div>
<div class="a vl" style="left:709px;top:388px;width:1px;height:21px"></div>
<div class="a vl" style="left:781px;top:388px;width:1px;height:21px"></div>
<svg style="left:301px;top:316px" width="10" height="17" viewBox="0 0 10 17" ><path d="M1.500 6V12.500Q1.500 15.500 4.800 15.500Q8.200 15.500 8.200 12.500V3.500Q8.200 1 6.200 1Q4.200 1 4.200 3.500V11.500" fill="none" stroke="#46c8bc" stroke-width="1.100"/><path d="M1.500 6V9M8.200 5V9" stroke="#2a4a9c" stroke-width=".5" stroke-dasharray="1 1"/></svg>
<div class="a" style="left:320px;top:347px;width:120px;height:19px;background:#ffffe1"></div>
<div class="t g" style="left:321px;top:349px">Johnson</div>
<svg style="left:279px;top:404px" width="7" height="8" viewBox="0 0 7 8" ><path d="M3.500 .3V7.700M.6 1.800L6.400 6.200M6.400 1.800L.6 6.200" stroke="#000" stroke-width="1.150" fill="none"/></svg>
<svg style="left:279px;top:361px" width="7" height="11" viewBox="0 0 7 11" ><path d="M3.200 1.200H5.600L3.800 8L1.400 9.800L1.600 7.200Z" fill="none" stroke="#000" stroke-width="1.200"/><rect x="4.600" y="8.800" width="1.300" height="1.400" fill="#000"/></svg>
<!-- navigator -->
<div class="a" style="left:595px;top:495px;width:235px;height:19px;background:linear-gradient(#f3f2ec,#fefefd)"></div>
<div class="a" style="left:277px;top:494px;width:318px;height:20px;background:#ece9d8"></div>
<div class="a nv" style="left:278px"><svg style="left:0px;top:0px" width="18" height="15" viewBox="0 0 18 15" ><path d="M4 3V11" stroke="#000" stroke-width="1.600"/><path d="M5 7L9 3.500V10.500ZM9 7L13 3.500V10.500Z" fill="#000"/></svg></div>
<div class="a nv" style="left:300px"><svg style="left:0px;top:0px" width="18" height="15" viewBox="0 0 18 15" ><path d="M3 7L8 3V11ZM8 7L13 3V11Z" fill="#000"/></svg></div>
<div class="a nv" style="left:322px"><svg style="left:0px;top:0px" width="18" height="15" viewBox="0 0 18 15" ><path d="M5 7L10 3V11Z" fill="#000"/></svg></div>
<div class="a nv" style="left:419px"><svg style="left:0px;top:0px" width="18" height="15" viewBox="0 0 18 15" ><path d="M12 7L7 3V11Z" fill="#000"/></svg></div>
<div class="a nv" style="left:441px"><svg style="left:0px;top:0px" width="18" height="15" viewBox="0 0 18 15" ><path d="M15 7L10 3V11ZM10 7L5 3V11Z" fill="#000"/></svg></div>
<div class="a nv" style="left:463px"><svg style="left:0px;top:0px" width="18" height="15" viewBox="0 0 18 15" ><path d="M14 3V11" stroke="#000" stroke-width="1.600"/><path d="M13 7L9 3.500V10.500ZM9 7L5 3.500V10.500Z" fill="#000"/></svg></div>
<div class="a nv" style="left:485px"><svg style="left:0px;top:0px" width="18" height="15" viewBox="0 0 18 15" ><path d="M5 7.500H13M9 3.500V11.500" stroke="#00006c" stroke-width="1.300"/></svg></div>
<div class="a nv" style="left:507px"><svg style="left:0px;top:0px" width="18" height="15" viewBox="0 0 18 15" ><path d="M5 7.500H13" stroke="#4a0000" stroke-width="1.300"/></svg></div>
<div class="a nv" style="left:529px;border-color:#c9c7ba;background:#f1efe6"><svg style="left:0px;top:0px" width="18" height="15" viewBox="0 0 18 15" ><path d="M5 9.500H13L9 5.500Z" fill="#8c8c8c"/></svg></div>
<div class="a nv" style="left:551px"><svg style="left:0px;top:0px" width="18" height="15" viewBox="0 0 18 15" ><path d="M4.500 8L7.500 11L14 3.500" fill="none" stroke="#0a6a0a" stroke-width="1.300"/><path d="M5 7.300L7.800 10.200" stroke="#000" stroke-width=".7"/></svg></div>
<div class="a nv" style="left:573px"><svg style="left:0px;top:0px" width="18" height="15" viewBox="0 0 18 15" ><path d="M5.500 4L12.500 11M12.500 4L5.500 11" stroke="#6a0a0a" stroke-width="1.100"/></svg></div>
<div class="t" style="left:347px;top:498px;font-family:'Liberation Sans',sans-serif;letter-spacing:0">Record 4 of 5</div>
<div class="a" style="left:277px;top:514px;width:553px;height:1px;background:#9db2d2"></div>
<div class="a" style="left:277px;top:515px;width:553px;height:1px;background:#f4f3ec"></div>
<div class="a" style="left:595px;top:497px;width:14px;height:16px;background:#eceadf;border-radius:2px"><svg style="left:0px;top:0px" width="14" height="16" viewBox="0 0 14 16" ><path d="M8.500 4L4.500 8L8.500 12" fill="none" stroke="#c4c2b4" stroke-width="1.500"/></svg></div>
<div class="a" style="left:814px;top:497px;width:14px;height:16px;background:#eceadf;border-radius:2px"><svg style="left:0px;top:0px" width="14" height="16" viewBox="0 0 14 16" ><path d="M5.500 4L9.500 8L5.500 12" fill="none" stroke="#c4c2b4" stroke-width="1.500"/></svg></div>
<!-- annotations -->
<svg style="left:0;top:0" width="950" height="580" shape-rendering="crispEdges" fill="none" stroke="#f0521a" stroke-width="1">
<rect x="87.500" y="86.500" width="81" height="25"/><path d="M54 106.500H87.500"/><rect x="53" y="105" width="3" height="3" fill="#f0521a" stroke="none"/>
<rect x="92.500" y="137.500" width="177" height="384"/><path d="M54 322.500H92.500"/><rect x="52" y="321" width="3" height="3" fill="#f0521a" stroke="none"/>
<rect x="367.500" y="89.500" width="23" height="25"/><path d="M380.500 15V89.500"/><rect x="379" y="14" width="3" height="3" fill="#f0521a" stroke="none"/>
<rect x="395.500" y="86.500" width="355" height="30"/><path d="M551.500 13V86.500"/><rect x="550" y="11" width="3" height="3" fill="#f0521a" stroke="none"/>
<path d="M855 131.500H504.500V190"/><rect x="503" y="189" width="3" height="3" fill="#f0521a" stroke="none"/>
<path d="M815 229.500H846.500V273.500H815M846.500 252.500H855.500V216"/><rect x="813" y="228" width="3" height="3" fill="#f0521a" stroke="none"/><rect x="813" y="272" width="3" height="3" fill="#f0521a" stroke="none"/>
<path d="M815 314.500H856"/><rect x="813" y="313" width="3" height="3" fill="#f0521a" stroke="none"/>
<rect x="304.500" y="418.500" width="109" height="65" fill="#fff"/><path d="M304.500 418V338"/><rect x="303" y="336" width="3" height="3" fill="#f0521a" stroke="none"/>
<path d="M421 361L495 434" shape-rendering="auto"/><rect x="420" y="360" width="3" height="3" fill="#f0521a" stroke="none"/>
<path d="M794.500 423V449.500H737.500M737.500 440V457" stroke="#e81a1a"/><rect x="793" y="421" width="3" height="3" fill="#e81a1a" stroke="none"/><rect x="736" y="438" width="3" height="3" fill="#e81a1a" stroke="none"/>
<rect x="660.500" y="460.500" width="21" height="30" stroke="#808080" fill="#fff"/>
<rect x="272.500" y="492.500" width="340" height="24"/>
<path d="M440 525.500H556.500V569.500H435.500V530L427.500 517.500Z" fill="rgba(255,255,255,.8)" shape-rendering="auto"/><rect x="426" y="516" width="3" height="3" fill="#f0521a" stroke="none"/>
<path d="M679.500 543.500H668.500V509.500H831.500V543.500H741"/><path d="M681 543.500H741" stroke-dasharray="2 2"/><path d="M678.500 543.500V558.500H686"/><rect x="686" y="557" width="3" height="3" fill="#f0521a" stroke="none"/>
</svg>
<svg style="left:665px;top:464px" width="12" height="22" viewBox="0 0 12 22" ><path d="M7.500 .5Q4 1.500 4.500 3Q5 4.500 7 5Q5.500 6.500 6 9" fill="none" stroke="#e81a1a" stroke-width="1"/><rect x="1.500" y="9" width="9" height="12" rx="4.300" fill="#fff" stroke="#e81a1a" stroke-width="1.100"/><path d="M1.500 14H10.500M6 9V14" stroke="#e81a1a" stroke-width="1"/></svg>
<div class="t org" style="left:15px;top:104px">Create</div>
<div class="t org" style="left:15px;top:117px">New Customer</div>
<div class="t org" style="left:17px;top:300px">Navigation</div>
<div class="t org" style="left:17px;top:313px">Pane</div>
<div class="t dbl" style="left:389px;top:7px">Refresh</div>
<div class="t dbl" style="left:389px;top:20px">the Grid</div>
<div class="t dbl" style="left:562px;top:7px">Use the Toolbar to tune</div>
<div class="t dbl" style="left:562px;top:20px">layout of the grid</div>
<div class="t red" style="left:855px;top:86px">Click on the column</div>
<div class="t red" style="left:855px;top:99px">header to sort data</div>
<div class="t red" style="left:855px;top:112px">by this column</div>
<div class="t red" style="left:855px;top:159px">Unread</div>
<div class="t red" style="left:855px;top:172px">documents</div>
<div class="t red" style="left:855px;top:185px">are displayed</div>
<div class="t red" style="left:855px;top:198px">with bold font</div>
<div class="t red" style="left:858px;top:315px">Documents</div>
<div class="t red" style="left:858px;top:328px">that have</div>
<div class="t red" style="left:858px;top:341px">been read</div>
<div class="t red" style="left:858px;top:354px">are displayed</div>
<div class="t red" style="left:858px;top:367px">with normal</div>
<div class="t red" style="left:858px;top:380px">font</div>
<div class="t red" style="left:313px;top:423px;letter-spacing:-.33px">The clip sing in</div>
<div class="t red" style="left:313px;top:436px;letter-spacing:-.33px">the column indicates</div>
<div class="t red" style="left:313px;top:449px;letter-spacing:-.33px">that the document</div>
<div class="t red" style="left:313px;top:462px;letter-spacing:-.33px">has files attached</div>
<div class="t red" style="left:481px;top:435px">Enter data of a new</div>
<div class="t red" style="left:481px;top:448px">customer directly</div>
<div class="t red" style="left:481px;top:461px">in the row</div>
<div class="t red" style="left:689px;top:464px">Double-click here</div>
<div class="t red" style="left:692px;top:477px">to create a new Customer</div>
<div class="t blu" style="left:449px;top:535px">Navigate the grid</div>
<div class="t blu" style="left:452px;top:548px">with this panel</div>
<div class="t blu" style="left:694px;top:549px">Displays the name of the</div>
<div class="t blu" style="left:694px;top:562px">user currently logged</div>
</body></html>
